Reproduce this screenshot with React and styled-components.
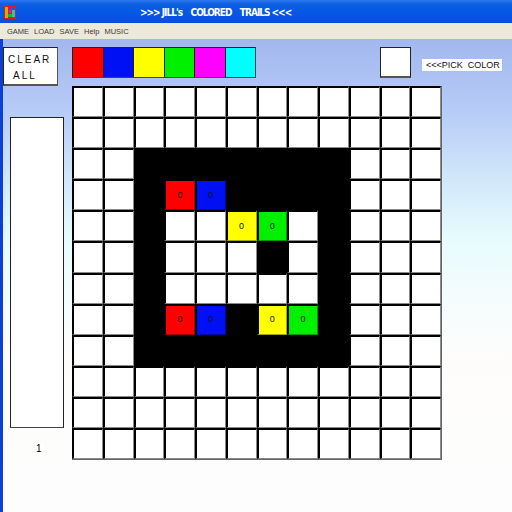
import React from "react";
import styled, { createGlobalStyle } from "styled-components";

const GlobalStyle = createGlobalStyle`
  html, body { margin: 0; padding: 0; }
  body { width: 512px; height: 512px; overflow: hidden; font-family: "Liberation Sans", Arial, sans-serif; }
`;

const SWATCHES = ["#ff0000", "#0010f4", "#ffff00", "#00f000", "#ff00ff", "#00ffff"];

// board map: . white, # black, r b y g coloured with a marker
const BOARD = [
  "............",
  "............",
  "..#######...",
  "..#rb####...",
  "..#..yg.#...",
  "..#...#.#...",
  "..#.....#...",
  "..#rb#yg#...",
  "..#######...",
  "............",
  "............",
  "............",
];

const FILL = {
  ".": "#ffffff",
  "#": "#000000",
  r: "#ff0000",
  b: "#0010f4",
  y: "#ffff00",
  g: "#00f000",
};

const edge = (fill) =>
  fill === "#000000" ? "#000" : fill === "#ffffff" ? "#8a8a8a" : "rgba(0,0,0,0.35)";

const Window = styled.div`
  width: 512px;
  height: 512px;
  display: flex;
  flex-direction: column;
`;

const TitleBar = styled.div`
  height: 23px;
  flex: none;
  box-sizing: border-box;
  display: flex;
  align-items: center;
  padding: 2px 0 0 4px;
  background: linear-gradient(to bottom, #2d78f0 0%, #0a5ee0 20%, #0556e6 60%, #0a4fd8 100%);
`;

const TitleText = styled.span`
  margin-left: 124px;
  color: #fff;
  font-family: "DejaVu Sans Condensed", "DejaVu Sans", sans-serif;
  font-weight: bold;
  font-size: 10px;
  white-space: pre;
  letter-spacing: -1px;
`;

const MenuBar = styled.div`
  height: 16px;
  flex: none;
  display: flex;
  align-items: center;
  gap: 5px;
  padding-left: 7px;
  background: #ece9d8;
  font-size: 7.5px;
  color: #3a3a3a;
`;

const Client = styled.div`
  flex: 1;
  display: flex;
  border-left: 3px solid #0b3fd6;
  padding-top: 8px;
  background: linear-gradient(
    to bottom,
    #a2b7ee 0%,
    #b6cbf6 15%,
    #d2e8fa 30%,
    #e6fbfd 42%,
    #f4fdfd 55%,
    #fdfcfb 68%,
    #fdfdfd 100%
  );
`;

const Sidebar = styled.div`
  width: 69px;
  flex: none;
  display: flex;
  flex-direction: column;
`;

const ClearButton = styled.div`
  width: 55px;
  height: 39px;
  box-sizing: border-box;
  background: #fff;
  border: 1px solid #222;
  border-right-color: #555;
  border-bottom: 2px solid #555;
  font-size: 10px;
  letter-spacing: 2px;
  line-height: 16px;
  padding: 4px 0 0 4px;
  white-space: nowrap;
  color: #111;
`;

const Indent = styled.div`
  padding-left: 5px;
`;

const Panel = styled.div`
  margin: 31px 0 0 7px;
  width: 54px;
  height: 311px;
  box-sizing: border-box;
  background: #fff;
  border: 1px solid #222;
  border-bottom-color: #444;
`;

const Counter = styled.span`
  align-self: flex-start;
  margin: 15px 0 0 31px;
  padding: 0 2px;
  background: #fff;
  font-size: 10px;
  line-height: 12px;
  color: #000;
`;

const Main = styled.div`
  display: flex;
  flex-direction: column;
`;

const TopRow = styled.div`
  display: flex;
  align-items: flex-start;
  height: 39px;
`;

const Palette = styled.div`
  display: flex;
  width: 184px;
  height: 31px;
  box-sizing: border-box;
  border: 1px solid #222;
  border-right-color: #444;
  border-bottom-color: #444;
`;

const Swatch = styled.div`
  flex: 1;
  background: ${(p) => p.$color};
  border-right: 1px solid #222;
  &:last-child { border-right: none; }
`;

const PickBox = styled.div`
  margin-left: 124px;
  width: 31px;
  height: 31px;
  box-sizing: border-box;
  background: #fff;
  border: 1px solid #222;
  border-bottom: 2px solid #555;
`;

const PickLabel = styled.span`
  margin: 12px 0 0 11px;
  padding: 0 2px 0 4px;
  background: #fff;
  font-size: 9px;
  line-height: 12px;
  white-space: pre;
  color: #111;
`;

const Board = styled.div`
  display: grid;
  width: 370px;
  height: 374px;
  box-sizing: border-box;
  grid-template-columns: repeat(12, 1fr);
  grid-template-rows: repeat(12, 1fr);
  border-right: 1px solid #666;
  border-bottom: 1px solid #666;
`;

const Cell = styled.div`
  box-sizing: border-box;
  display: flex;
  align-items: center;
  justify-content: center;
  background: ${(p) => p.$fill};
  border-top: 2px solid #000;
  border-left: 2px solid #000;
  border-right: 1px solid ${(p) => edge(p.$fill)};
  border-bottom: 1px solid ${(p) => edge(p.$fill)};
  font-size: 9px;
  line-height: 1;
  color: #111;
`;

const AppIcon = () => (
  <svg width="12" height="13" viewBox="0 0 12 13">
    <rect width="12" height="13" fill="#d02020" />
    <rect x="1" y="1" width="3" height="11" fill="#f0a000" />
    <rect x="4" y="8" width="4" height="3" fill="#20b040" />
    <rect x="6" y="1" width="5" height="3" fill="#3050e0" />
    <rect x="8" y="4" width="3" height="7" fill="#30c0c0" />
    <rect x="5" y="4" width="2" height="3" fill="#a040c0" />
  </svg>
);

export default function App() {
  return (
    <Window>
      <GlobalStyle />
      <TitleBar>
        <AppIcon />
        <TitleText>{">>> JILL's    COLORED    TRAILS <<<"}</TitleText>
      </TitleBar>
      <MenuBar>
        <span>GAME</span>
        <span>LOAD</span>
        <span>SAVE</span>
        <span>Help</span>
        <span>MUSIC</span>
      </MenuBar>
      <Client>
        <Sidebar>
          <ClearButton>
            <div>CLEAR</div>
            <Indent>ALL</Indent>
          </ClearButton>
          <Panel />
          <Counter>1</Counter>
        </Sidebar>
        <Main>
          <TopRow>
            <Palette>
              {SWATCHES.map((c) => (
                <Swatch key={c} $color={c} />
              ))}
            </Palette>
            <PickBox />
            <PickLabel>{"<<<PICK  COLOR"}</PickLabel>
          </TopRow>
          <Board>
            {BOARD.flatMap((row, r) =>
              row.split("").map((ch, c) => (
                <Cell key={`${r}-${c}`} $fill={FILL[ch]}>
                  {"rbyg".includes(ch) ? "0" : null}
                </Cell>
              ))
            )}
          </Board>
        </Main>
      </Client>
    </Window>
  );
}
